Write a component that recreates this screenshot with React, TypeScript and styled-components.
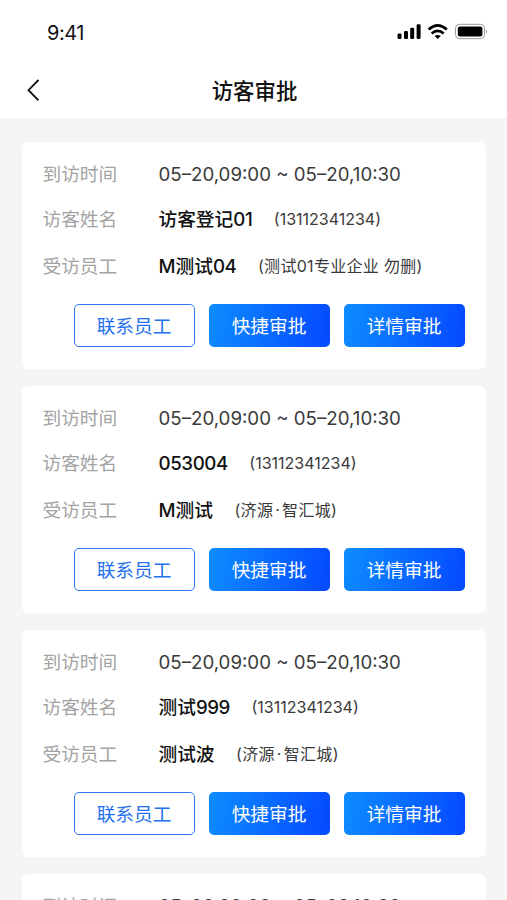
import React from "react";
import styled, { createGlobalStyle } from "styled-components";

const GlobalStyle = createGlobalStyle`
  * { box-sizing: border-box; }
  html, body { margin: 0; height: 900px; overflow: hidden; background: #f5f5f5; }
  body { font-family: Inter, "Noto Sans CJK SC", sans-serif; color: #1a1a1a; }
`;

const Screen = styled.div`
  width: 507px;
  height: 900px;
  overflow: hidden;
  background: #f5f5f5;
`;

const StatusBar = styled.div`
  display: flex;
  justify-content: space-between;
  align-items: center;
  height: 64px;
  padding: 0 19px 0 47px;
  background: #fff;
`;

const Clock = styled.span`
  padding-top: 2px;
  font-size: 20px;
  line-height: 24px;
  letter-spacing: -0.45px;
  color: #111;
`;

const StatusIcons = styled.svg`
  display: block;
  width: 91px;
  height: 20px;
`;

const NavBar = styled.header`
  display: grid;
  grid-template-columns: 60px 1fr 60px;
  align-items: center;
  height: 54px;
  background: #fff;
`;

const BackButton = styled.button`
  display: flex;
  width: 60px;
  padding: 0 0 2px 25px;
  border: 0;
  background: none;
`;

const Title = styled.h1`
  margin: 0 0 0 2px;
  text-align: center;
  font-size: 21.4px;
  line-height: 30px;
  font-weight: 500;
  color: #111;
`;

const List = styled.main`
  display: flex;
  flex-direction: column;
  gap: 17px;
  padding: 24px 21px 0 22px;
`;

const Card = styled.article`
  flex: none;
  height: 227px;
  padding: 10px 21px 0 20.5px;
  border-radius: 6px;
  background: #fff;
`;

const Row = styled.div<{ $height: number }>`
  display: flex;
  align-items: center;
  height: ${(p) => p.$height}px;
  white-space: pre;
`;

const Label = styled.span`
  width: 116px;
  font-size: 18.7px;
  line-height: 28px;
  font-weight: 400;
  color: #a3a3a3;
`;

const Period = styled.span`
  font-size: 18.7px;
  line-height: 28px;
  color: #3a3a3a;
`;

const Name = styled.strong`
  font-size: 18.7px;
  line-height: 28px;
  font-weight: 500;
  color: #111;
`;

const Digits = styled.span`
  letter-spacing: -0.4px;
`;

const Note = styled.span<{ $tracking?: number }>`
  margin-left: 21.5px;
  padding-bottom: 2px;
  font-size: 16px;
  line-height: 24px;
  letter-spacing: ${(p) => p.$tracking ?? 0}px;
  color: #3a3a3a;
`;

const Dot = styled.span`
  margin: 0 2px;
`;

const Actions = styled.div`
  display: flex;
  justify-content: flex-end;
  gap: 14px;
  margin-top: 12px;
`;

const Action = styled.button<{ $primary?: boolean }>`
  width: 121px;
  height: 43px;
  padding: 2px 1px 0 0;
  border: ${(p) => (p.$primary ? "0" : "1.5px solid #2c74f0")};
  border-radius: 5px;
  background: ${(p) => (p.$primary ? "linear-gradient(100deg, #0d8dff 0%, #0449ff 100%)" : "#fff")};
  color: ${(p) => (p.$primary ? "#fff" : "#2470ee")};
  font: 400 18.7px/28px Inter, "Noto Sans CJK SC", sans-serif;
`;

type Visit = { name: string; phone: string; host: string; company: string };

const visits: Visit[] = [
  { name: "访客登记01", phone: "13112341234", host: "M测试04", company: "测试01专业企业 勿删" },
  { name: "053004", phone: "13112341234", host: "M测试", company: "济源·智汇城" },
  { name: "测试999", phone: "13112341234", host: "测试波", company: "济源·智汇城" },
];

function PersonName({ text }: { text: string }) {
  return (
    <Name>
      {text.split(/(\d+)/).map((part, i) => (i % 2 ? <Digits key={i}>{part}</Digits> : part))}
    </Name>
  );
}

function PeriodRow() {
  return (
    <Row $height={45}>
      <Label>到访时间</Label>
      <Period>05–20,09:00 ~ 05–20,10:30</Period>
    </Row>
  );
}

function VisitCard({ visit }: { visit: Visit }) {
  return (
    <Card>
      <PeriodRow />
      <Row $height={45}>
        <Label>访客姓名</Label>
        <PersonName text={visit.name} />
        <Note>({visit.phone})</Note>
      </Row>
      <Row $height={50}>
        <Label>受访员工</Label>
        <PersonName text={visit.host} />
        <Note $tracking={0.3}>
          ({visit.company.split(/(·)/).map((part, i) => (i % 2 ? <Dot key={i}>{part}</Dot> : part))})
        </Note>
      </Row>
      <Actions>
        <Action>联系员工</Action>
        <Action $primary>快捷审批</Action>
        <Action $primary>详情审批</Action>
      </Actions>
    </Card>
  );
}

export default function App() {
  return (
    <Screen>
      <GlobalStyle />
      <StatusBar>
        <Clock>9:41</Clock>
        <StatusIcons viewBox="0 0 91 20">
          <g fill="#000">
            <rect x="0.5" y="11.5" width="4" height="5.5" rx="1.3" />
            <rect x="7" y="9" width="4" height="8" rx="1.3" />
            <rect x="13.2" y="5.7" width="4" height="11.3" rx="1.3" />
            <rect x="19.6" y="2.2" width="4" height="14.8" rx="1.3" />
            <path d="M40.7 17 37.6 13.9Q40.7 11.9 43.8 13.9Z" />
          </g>
          <g fill="none" stroke="#000" strokeWidth="2.7">
            <path d="M31.6 7.4Q40.7-0.8 49.8 7.4" />
            <path d="M34.7 11.4Q40.7 6.2 46.7 11.4" />
          </g>
          <rect x="58.5" y="2.3" width="29" height="14.4" rx="4" fill="none" stroke="#999" strokeWidth="1" />
          <rect x="60.8" y="4.5" width="24.6" height="10" rx="2" fill="#000" />
          <path d="M89 7.3q2 2.2 0 4.4z" fill="#999" />
        </StatusIcons>
      </StatusBar>
      <NavBar>
        <BackButton aria-label="返回">
          <svg width="16" height="24" viewBox="0 0 16 24" fill="none" stroke="#111" strokeWidth="1.8">
            <path d="M13.5 2 3.5 12.2 13.5 22.4" />
          </svg>
        </BackButton>
        <Title>访客审批</Title>
      </NavBar>
      <List>
        {visits.map((visit, i) => (
          <VisitCard key={i} visit={visit} />
        ))}
        <Card>
          <PeriodRow />
        </Card>
      </List>
    </Screen>
  );
}
